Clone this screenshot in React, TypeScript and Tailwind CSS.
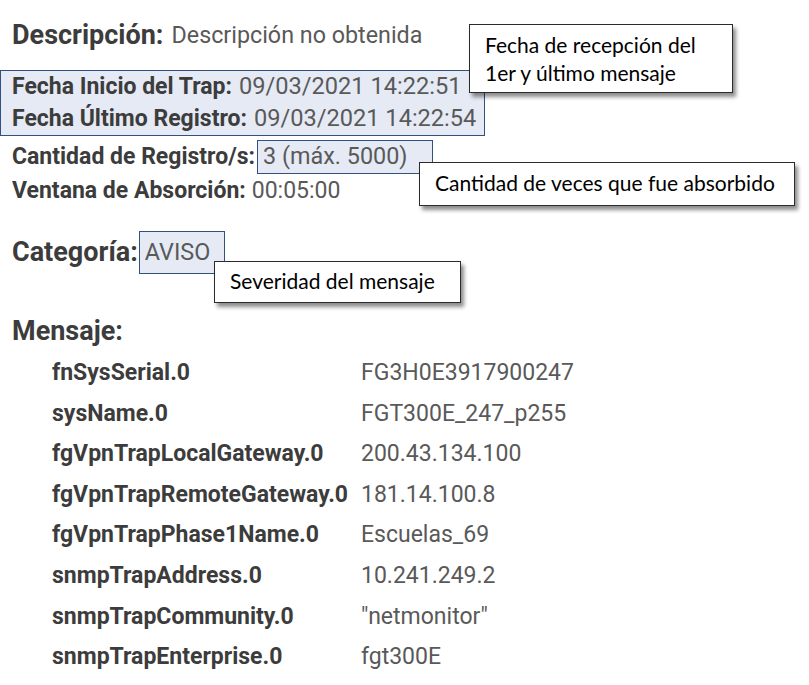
import React from 'react'

const rows: [string, string][] = [
    ['fnSysSerial.0', 'FG3H0E3917900247'],
    ['sysName.0', 'FGT300E_247_p255'],
    ['fgVpnTrapLocalGateway.0', '200.43.134.100'],
    ['fgVpnTrapRemoteGateway.0', '181.14.100.8'],
    ['fgVpnTrapPhase1Name.0', 'Escuelas_69'],
    ['snmpTrapAddress.0', '10.241.249.2'],
    ['snmpTrapCommunity.0', '"netmonitor"'],
    ['snmpTrapEnterprise.0', 'fgt300E'],
]

// annotation box drawn over the screenshot
const Callout = ({ className, children }: { className: string; children: React.ReactNode }) => (
    <div
        className={`absolute bg-white border-[1.5px] border-[#2b2b2b] shadow-[3px_4px_4px_rgba(0,0,0,0.45)] text-[21px] text-black font-['Lato','Liberation_Sans',sans-serif] leading-[28px] ${className}`}
    >
        {children}
    </div>
)

const App = () => {
    return (
        <div className="relative w-[809px] h-[685px] bg-white pl-3 overflow-hidden font-['Roboto','Liberation_Sans',sans-serif] text-[#595959]">
            <div className="pt-[18px] h-[52px] flex items-center">
                <span className="text-[27px] font-bold text-[#3c3c3c]">Descripción:</span>
                <span className="ml-[8px] text-[23.3px]">Descripción no obtenida</span>
            </div>

            <div className="mt-[18px] -ml-3 w-fit pl-[11px] pr-[8px] border-[1.5px] border-[#34507e] bg-[#e5eaf5] text-[23px]">
                <div className="h-[32px] flex items-center">
                    <span className="font-bold text-[#3c3c3c]">Fecha Inicio del Trap:</span>
                    <span className="ml-[7px] text-[23.6px]">09/03/2021 14:22:51</span>
                </div>
                <div className="h-[32px] flex items-center">
                    <span className="font-bold text-[#3c3c3c]">Fecha Último Registro:</span>
                    <span className="ml-[7px] text-[23.6px]">09/03/2021 14:22:54</span>
                </div>
            </div>

            <div className="mt-[4px] h-[34px] flex items-center text-[23px]">
                <span className="font-bold text-[#3c3c3c]">Cantidad de Registro/s:</span>
                <span className="ml-[2px] h-full flex items-center pl-[5px] pr-[24px] border-[1.5px] border-[#34507e] bg-[#e5eaf5] text-[23.4px]">
                    3 (máx. 5000)
                </span>
            </div>
            <div className="h-[34px] flex items-center text-[23px]">
                <span className="font-bold text-[#3c3c3c]">Ventana de Absorción:</span>
                <span className="ml-[6px]">00:05:00</span>
            </div>

            <div className="mt-[23px] h-[43px] flex items-center">
                <span className="text-[27px] font-bold text-[#3c3c3c]">Categoría:</span>
                <span className="ml-[1px] h-full flex items-center pl-[5px] pr-[14px] border-[1.5px] border-[#34507e] bg-[#e5eaf5] text-[23.4px]">
                    AVISO
                </span>
            </div>

            <div className="mt-[39px] h-[36px] flex items-center text-[27px] font-bold text-[#3c3c3c]">Mensaje:</div>

            <div className="mt-[4px] pl-10">
                {rows.map(([k, v]) => (
                    <div key={k} className="h-[40.6px] flex items-center text-[23px]">
                        <span className="w-[309px] shrink-0 font-bold text-[#3c3c3c]">{k}</span>
                        <span>{v}</span>
                    </div>
                ))}
            </div>

            <Callout className="left-[469px] top-[24px] w-[264px] h-[69px] pl-[15px] pt-[6px]">
                <div>Fecha de recepción del</div>
                <div>1er y último mensaje</div>
            </Callout>
            <Callout className="left-[419px] top-[162px] w-[376px] h-[44px] pl-[15px] pt-[6px]">
                Cantidad de veces que fue absorbido
            </Callout>
            <Callout className="left-[214px] top-[261px] w-[247px] h-[42px] pl-[15px] pt-[5px]">
                Severidad del mensaje
            </Callout>
        </div>
    )
}

export default App
